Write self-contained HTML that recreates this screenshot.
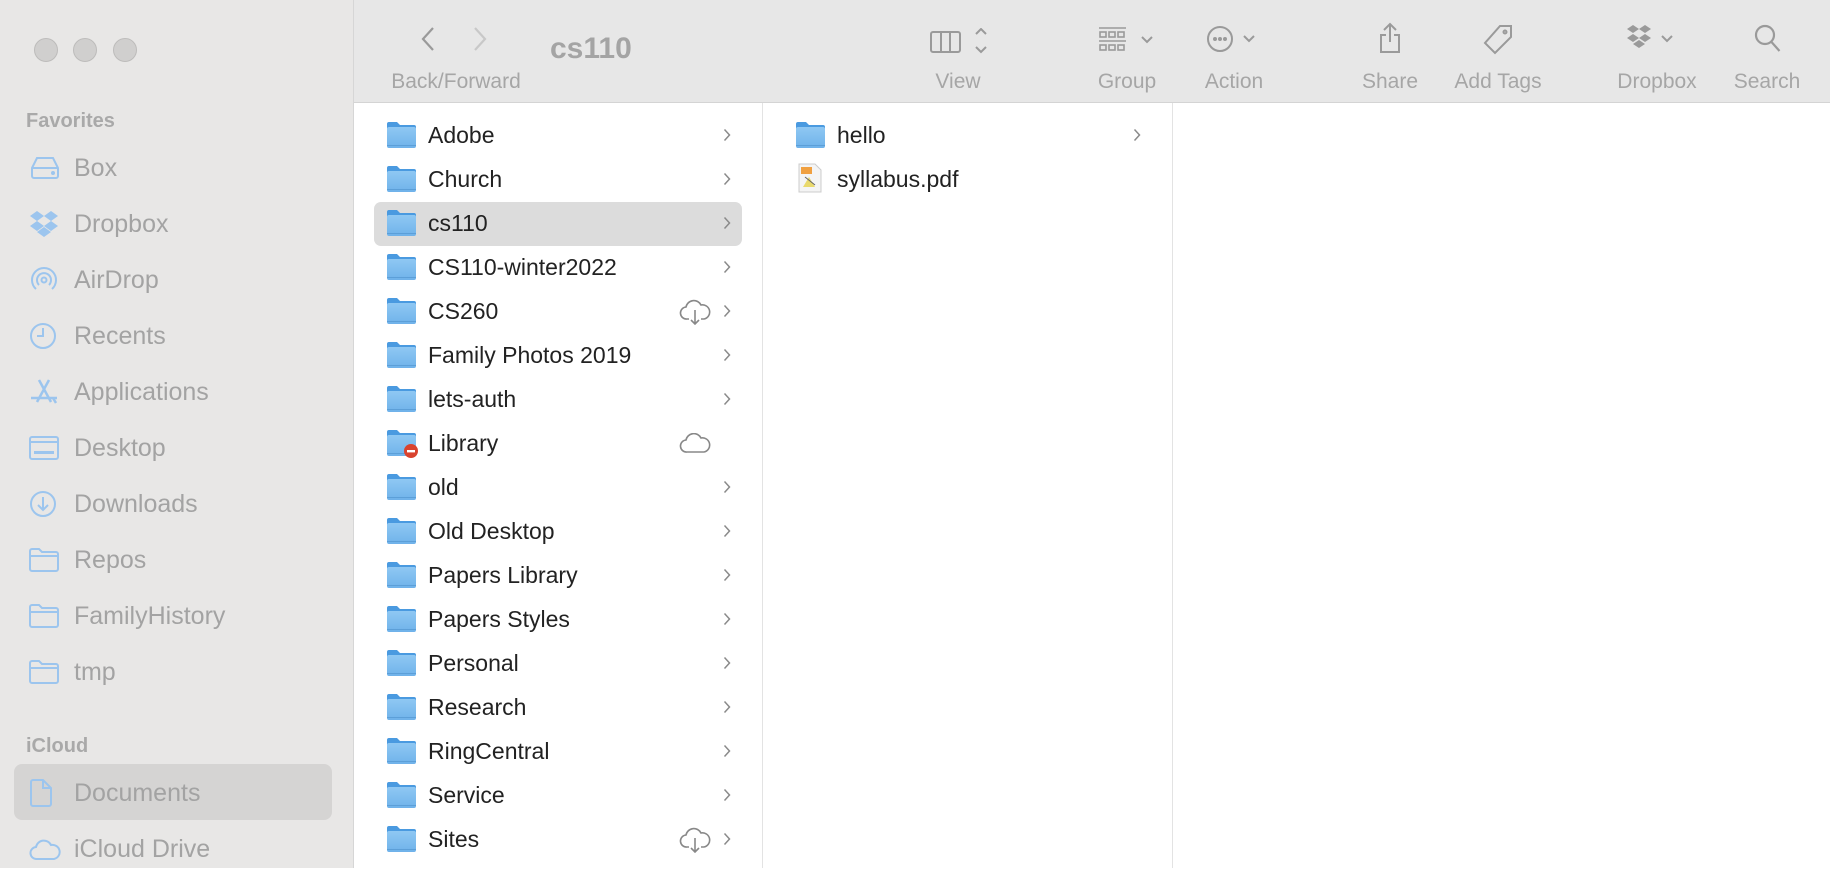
<!DOCTYPE html>
<html><head><meta charset="utf-8"><style>
*{margin:0;padding:0;box-sizing:border-box}
body{width:1830px;height:868px;overflow:hidden;background:#fff;font-family:"Liberation Sans",sans-serif;position:relative}
.sb{position:absolute;left:0;top:0;width:354px;height:868px;background:#e8e7e6;border-right:1px solid #d6d6d6}
.tl{position:absolute;top:38px;width:24px;height:24px;border-radius:50%;background:#d0cfce;border:1px solid #bdbcbb}
.hd{position:absolute;left:26px;font-size:20px;font-weight:bold;color:#a9a9a9}
.si{position:absolute;left:0;width:354px;height:40px;display:flex;align-items:center;font-size:25px;color:#a3a3a3}
.si svg{position:absolute;left:29px}
.si span{position:absolute;left:74px}
.tb{position:absolute;left:354px;top:0;width:1476px;height:103px;background:#e7e7e7;border-bottom:1px solid #d4d4d4}
.lb{position:absolute;top:70px;font-size:21px;color:#a6a6a6;transform:translateX(-50%);white-space:nowrap}
.ic{position:absolute;top:24px}
.col1{position:absolute;left:354px;top:103px;width:409px;height:765px;border-right:1px solid #e3e3e3}
.col2{position:absolute;left:763px;top:103px;width:410px;height:765px;border-right:1px solid #e3e3e3}
.r{position:absolute;height:44px;display:flex;align-items:center;font-size:23px;color:#222}
.r .f{position:absolute;left:32px;top:8px}
.r .t{position:absolute;left:74px}
.r .c{position:absolute;right:32px;top:15px;width:8px;height:14px;background:none}
</style></head><body>
<svg width="0" height="0" style="position:absolute"><defs>
<linearGradient id="fg" x1="0" y1="0" x2="0" y2="1"><stop offset="0" stop-color="#8fc8f3"/><stop offset="1" stop-color="#6fb2ea"/></linearGradient>
<symbol id="fold" viewBox="0 0 31 28"><path d="M1 3a2 2 0 0 1 2-2h8l3 3h14a2 2 0 0 1 2 2v4H1z" fill="#4a9ae0"/><rect x="1" y="6" width="29" height="21" rx="2" fill="url(#fg)"/><rect x="1" y="24" width="29" height="1" fill="#5c9fd8"/></symbol>
<symbol id="chev" viewBox="0 0 8 14"><path d="M1.5 1.5l5 5.5-5 5.5" fill="none" stroke="#8a8a8a" stroke-width="1.5"/></symbol>
</defs></svg>

<div class="sb">
<div class="tl" style="left:34px"></div><div class="tl" style="left:73px"></div><div class="tl" style="left:113px"></div>
<div class="hd" style="top:110px">Favorites</div>
<div class="si" style="top:148px"><svg width="32" height="26" viewBox="0 0 32 26" fill="none" stroke="#9cc5ee" stroke-width="2"><path d="M3 13l5-10h16l5 10v8a2 2 0 0 1-2 2H5a2 2 0 0 1-2-2z M3 13h26"/><circle cx="24" cy="18" r="1" fill="#9cc5ee"/></svg><span>Box</span></div>
<div class="si" style="top:204px"><svg width="30" height="28" viewBox="0 0 30 28" fill="#9cc5ee"><path d="M8 1l7 5-7 5-7-5zM22 1l7 5-7 5-7-5zM8 11l7 5-7 5-7-5zM22 11l7 5-7 5-7-5zM15 17l7 5-7 5-7-5z"/></svg><span>Dropbox</span></div>
<div class="si" style="top:260px"><svg width="30" height="30" viewBox="0 0 30 30" fill="none" stroke="#9cc5ee" stroke-width="2"><path d="M7 24a12 12 0 1 1 16 0M10 20a7 7 0 1 1 10 0"/><circle cx="15" cy="15" r="2.5"/></svg><span>AirDrop</span></div>
<div class="si" style="top:316px"><svg width="28" height="28" viewBox="0 0 28 28" fill="none" stroke="#9cc5ee" stroke-width="2"><circle cx="14" cy="14" r="12"/><path d="M14 6v8H8"/></svg><span>Recents</span></div>
<div class="si" style="top:372px"><svg width="30" height="28" viewBox="0 0 30 28" fill="none" stroke="#9cc5ee" stroke-width="2.5"><path d="M10 2l12 22M20 2L8 24M2 20h26M24 20l3 5"/></svg><span>Applications</span></div>
<div class="si" style="top:428px"><svg width="30" height="24" viewBox="0 0 30 24" fill="none" stroke="#9cc5ee" stroke-width="2"><rect x="1" y="1" width="28" height="22" rx="2"/><path d="M1 6h28"/><rect x="5" y="15" width="20" height="3" fill="#9cc5ee" stroke="none"/></svg><span>Desktop</span></div>
<div class="si" style="top:484px"><svg width="28" height="28" viewBox="0 0 28 28" fill="none" stroke="#9cc5ee" stroke-width="2"><circle cx="14" cy="14" r="12"/><path d="M14 7v13M9 15l5 5 5-5"/></svg><span>Downloads</span></div>
<div class="si" style="top:540px"><svg width="30" height="24" viewBox="0 0 30 24" fill="none" stroke="#9cc5ee" stroke-width="2"><path d="M1 3a2 2 0 0 1 2-2h7l3 3h14a2 2 0 0 1 2 2v15a2 2 0 0 1-2 2H3a2 2 0 0 1-2-2z M1 8h28"/></svg><span>Repos</span></div>
<div class="si" style="top:596px"><svg width="30" height="24" viewBox="0 0 30 24" fill="none" stroke="#9cc5ee" stroke-width="2"><path d="M1 3a2 2 0 0 1 2-2h7l3 3h14a2 2 0 0 1 2 2v15a2 2 0 0 1-2 2H3a2 2 0 0 1-2-2z M1 8h28"/></svg><span>FamilyHistory</span></div>
<div class="si" style="top:652px"><svg width="30" height="24" viewBox="0 0 30 24" fill="none" stroke="#9cc5ee" stroke-width="2"><path d="M1 3a2 2 0 0 1 2-2h7l3 3h14a2 2 0 0 1 2 2v15a2 2 0 0 1-2 2H3a2 2 0 0 1-2-2z M1 8h28"/></svg><span>tmp</span></div>
<div class="hd" style="top:735px">iCloud</div>
<div style="position:absolute;left:14px;top:764px;width:318px;height:56px;border-radius:8px;background:#d5d4d3"></div>
<div class="si" style="top:773px"><svg width="24" height="28" viewBox="0 0 24 28" fill="none" stroke="#9cc5ee" stroke-width="2"><path d="M2 3a2 2 0 0 1 2-2h10l8 8v16a2 2 0 0 1-2 2H4a2 2 0 0 1-2-2zM14 1v8h8"/></svg><span>Documents</span></div>
<div class="si" style="top:829px"><svg width="32" height="22" viewBox="0 0 32 22" fill="none" stroke="#9cc5ee" stroke-width="2"><path d="M8 21a6 6 0 0 1-1-12 8 8 0 0 1 15-2 7 7 0 0 1 3 14z"/></svg><span>iCloud Drive</span></div>
</div>

<div class="tb">
<svg class="ic" style="left:66px;top:26px" width="16" height="26" viewBox="0 0 16 26" fill="none" stroke="#9a9a9a" stroke-width="2.2"><path d="M13 2L3 13l10 11"/></svg>
<svg class="ic" style="left:118px;top:26px" width="16" height="26" viewBox="0 0 16 26" fill="none" stroke="#c8c8c8" stroke-width="2.2"><path d="M3 2l10 11L3 24"/></svg>
<div style="position:absolute;left:196px;top:32px;font-size:30px;font-weight:bold;color:#a4a4a4">cs110</div>
<div class="lb" style="left:102px">Back/Forward</div>
<svg class="ic" style="left:576px;top:28px" width="60" height="26" viewBox="0 0 60 26" fill="none" stroke="#9a9a9a" stroke-width="2"><rect x="1" y="4" width="29" height="20" rx="2"/><path d="M11 4v20M20 4v20M46 6l5-5 5 5M46 19l5 5 5-5"/></svg>
<div class="lb" style="left:604px">View</div>
<svg class="ic" style="left:744px;top:26px" width="60" height="28" viewBox="0 0 60 28" fill="none" stroke="#9a9a9a" stroke-width="1.6"><path d="M1 2h27M1 15h27"/><rect x="2" y="6" width="6" height="5"/><rect x="11" y="6" width="6" height="5"/><rect x="20" y="6" width="6" height="5"/><rect x="2" y="19" width="6" height="5"/><rect x="11" y="19" width="6" height="5"/><rect x="20" y="19" width="6" height="5"/><path d="M44 11l5 5 5-5" stroke-width="2"/></svg>
<div class="lb" style="left:773px">Group</div>
<svg class="ic" style="left:852px;top:24px" width="60" height="30" viewBox="0 0 60 30" fill="none" stroke="#9a9a9a" stroke-width="2"><circle cx="14" cy="15" r="12"/><circle cx="9" cy="15" r="1" fill="#9a9a9a"/><circle cx="14" cy="15" r="1" fill="#9a9a9a"/><circle cx="19" cy="15" r="1" fill="#9a9a9a"/><path d="M38 12l5 5 5-5"/></svg>
<div class="lb" style="left:880px">Action</div>
<svg class="ic" style="left:1024px;top:22px" width="24" height="32" viewBox="0 0 24 32" fill="none" stroke="#9a9a9a" stroke-width="2"><path d="M12 2v18M6 8l6-6 6 6M8 13H3v17h18V13h-5"/></svg>
<div class="lb" style="left:1036px">Share</div>
<svg class="ic" style="left:1128px;top:24px" width="32" height="32" viewBox="0 0 32 32" fill="none" stroke="#9a9a9a" stroke-width="2"><path d="M18 2h11v11L13 29 3 19z"/><circle cx="23" cy="8" r="1.5"/></svg>
<div class="lb" style="left:1144px">Add Tags</div>
<svg class="ic" style="left:1272px;top:24px" width="60" height="30" viewBox="0 0 60 30" fill="#9a9a9a"><path d="M7 1l6 4-6 4-6-4zM19 1l6 4-6 4-6-4zM7 10l6 4-6 4-6-4zM19 10l6 4-6 4-6-4zM13 16l6 4-6 4-6-4z"/><path d="M36 12l5 5 5-5" fill="none" stroke="#9a9a9a" stroke-width="2"/></svg>
<div class="lb" style="left:1303px">Dropbox</div>
<svg class="ic" style="left:1400px;top:24px" width="28" height="30" viewBox="0 0 28 30" fill="none" stroke="#9a9a9a" stroke-width="2.2"><circle cx="11" cy="11" r="9"/><path d="M17.5 18l8 9"/></svg>
<div class="lb" style="left:1413px">Search</div>
</div>

<div class="col1">
<div style="position:absolute;left:20px;top:99px;width:368px;height:44px;border-radius:7px;background:#dcdcdc"></div>
<div class="r" style="top:10px;width:409px"><svg class="f" width="31" height="28"><use href="#fold"/></svg><span class="t">Adobe</span><svg class="c"><use href="#chev"/></svg></div>
<div class="r" style="top:54px;width:409px"><svg class="f" width="31" height="28"><use href="#fold"/></svg><span class="t">Church</span><svg class="c"><use href="#chev"/></svg></div>
<div class="r" style="top:98px;width:409px"><svg class="f" width="31" height="28"><use href="#fold"/></svg><span class="t">cs110</span><svg class="c"><use href="#chev"/></svg></div>
<div class="r" style="top:142px;width:409px"><svg class="f" width="31" height="28"><use href="#fold"/></svg><span class="t">CS110-winter2022</span><svg class="c"><use href="#chev"/></svg></div>
<div class="r" style="top:186px;width:409px"><svg class="f" width="31" height="28"><use href="#fold"/></svg><span class="t">CS260</span><svg style="position:absolute;left:325px;top:10px" width="32" height="26" viewBox="0 0 32 26" fill="none" stroke="#888" stroke-width="1.6"><path d="M10 20H8a6 6 0 0 1-1-12 8 8 0 0 1 15-2 7 7 0 0 1 3 14h-3M16 11v14M12 21l4 4 4-4"/></svg><svg class="c"><use href="#chev"/></svg></div>
<div class="r" style="top:230px;width:409px"><svg class="f" width="31" height="28"><use href="#fold"/></svg><span class="t">Family Photos 2019</span><svg class="c"><use href="#chev"/></svg></div>
<div class="r" style="top:274px;width:409px"><svg class="f" width="31" height="28"><use href="#fold"/></svg><span class="t">lets-auth</span><svg class="c"><use href="#chev"/></svg></div>
<div class="r" style="top:318px;width:409px"><svg class="f" width="31" height="28"><use href="#fold"/></svg><svg style="position:absolute;left:49px;top:22px" width="16" height="16"><circle cx="8" cy="8" r="7" fill="#d9432f"/><rect x="4" y="7" width="8" height="2.4" fill="#fff"/></svg><span class="t">Library</span><svg style="position:absolute;left:325px;top:12px" width="32" height="20" viewBox="0 0 32 20" fill="none" stroke="#888" stroke-width="1.6"><path d="M8 19a6 6 0 0 1-1-12 8 8 0 0 1 15-2 7 7 0 0 1 3 14z"/></svg></div>
<div class="r" style="top:362px;width:409px"><svg class="f" width="31" height="28"><use href="#fold"/></svg><span class="t">old</span><svg class="c"><use href="#chev"/></svg></div>
<div class="r" style="top:406px;width:409px"><svg class="f" width="31" height="28"><use href="#fold"/></svg><span class="t">Old Desktop</span><svg class="c"><use href="#chev"/></svg></div>
<div class="r" style="top:450px;width:409px"><svg class="f" width="31" height="28"><use href="#fold"/></svg><span class="t">Papers Library</span><svg class="c"><use href="#chev"/></svg></div>
<div class="r" style="top:494px;width:409px"><svg class="f" width="31" height="28"><use href="#fold"/></svg><span class="t">Papers Styles</span><svg class="c"><use href="#chev"/></svg></div>
<div class="r" style="top:538px;width:409px"><svg class="f" width="31" height="28"><use href="#fold"/></svg><span class="t">Personal</span><svg class="c"><use href="#chev"/></svg></div>
<div class="r" style="top:582px;width:409px"><svg class="f" width="31" height="28"><use href="#fold"/></svg><span class="t">Research</span><svg class="c"><use href="#chev"/></svg></div>
<div class="r" style="top:626px;width:409px"><svg class="f" width="31" height="28"><use href="#fold"/></svg><span class="t">RingCentral</span><svg class="c"><use href="#chev"/></svg></div>
<div class="r" style="top:670px;width:409px"><svg class="f" width="31" height="28"><use href="#fold"/></svg><span class="t">Service</span><svg class="c"><use href="#chev"/></svg></div>
<div class="r" style="top:714px;width:409px"><svg class="f" width="31" height="28"><use href="#fold"/></svg><span class="t">Sites</span><svg style="position:absolute;left:325px;top:10px" width="32" height="26" viewBox="0 0 32 26" fill="none" stroke="#888" stroke-width="1.6"><path d="M10 20H8a6 6 0 0 1-1-12 8 8 0 0 1 15-2 7 7 0 0 1 3 14h-3M16 11v14M12 21l4 4 4-4"/></svg><svg class="c"><use href="#chev"/></svg></div>
</div>

<div class="col2">
<div class="r" style="top:10px;width:410px"><svg class="f" width="31" height="28"><use href="#fold"/></svg><span class="t">hello</span><svg class="c"><use href="#chev"/></svg></div>
<div class="r" style="top:54px;width:410px"><svg class="f" width="26" height="30" viewBox="0 0 26 30" style="left:34px;top:6px"><path d="M2 1h16l6 6v22H2z" fill="#f4f4f4" stroke="#ccc"/><rect x="4" y="4" width="11" height="7" fill="#f0a040"/><path d="M6 24l6-10 6 10z" fill="#e6d24a" opacity=".8"/><path d="M8 14l10 8" stroke="#666"/></svg><span class="t">syllabus.pdf</span></div>
</div>
</body></html>
